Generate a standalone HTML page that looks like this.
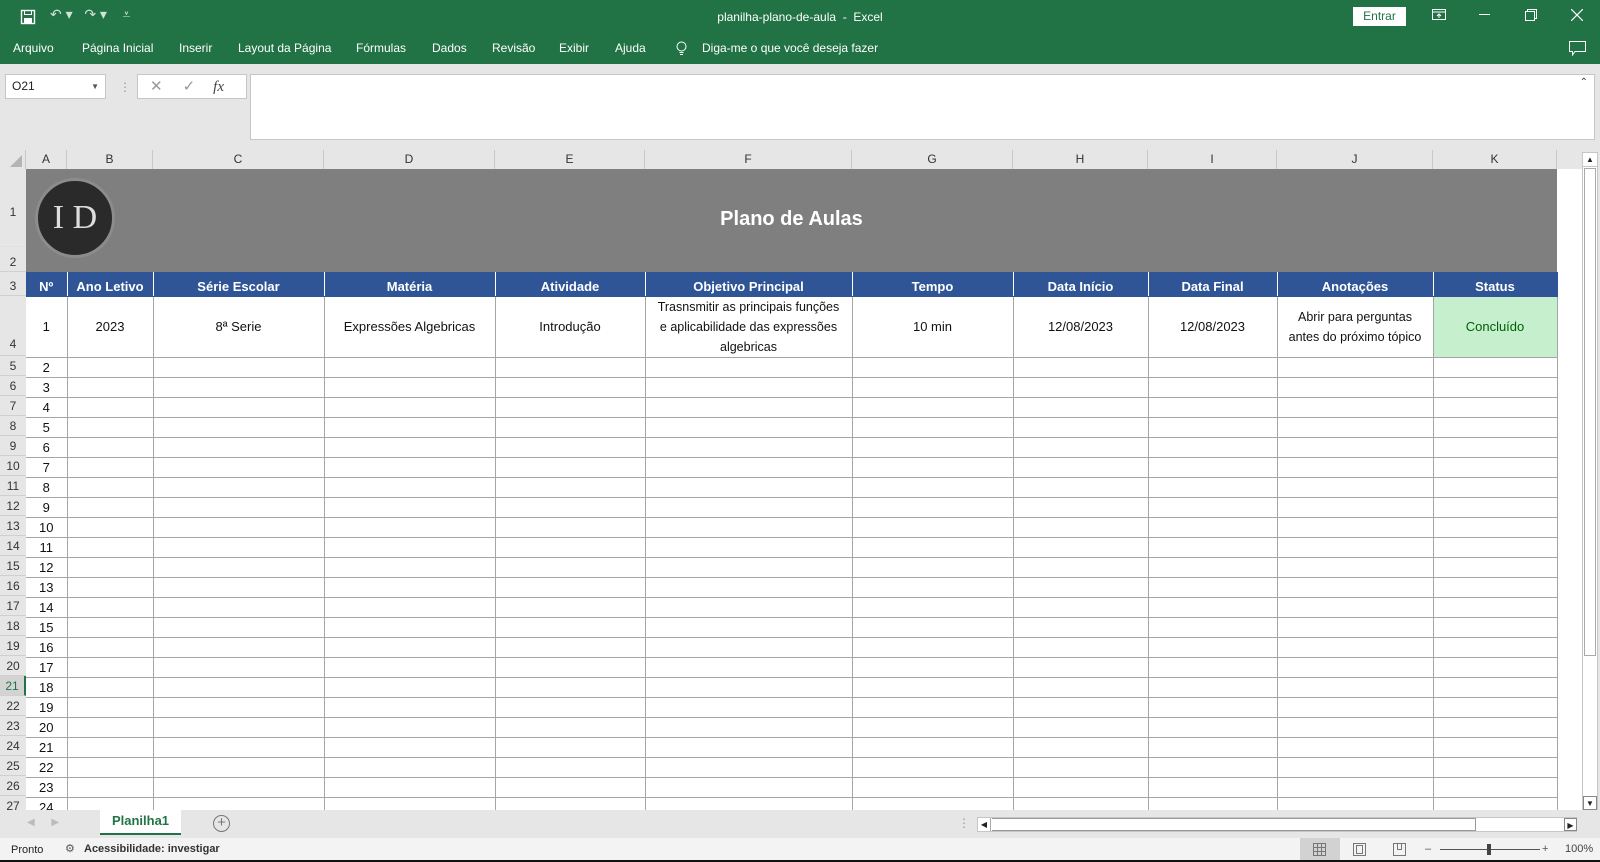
<!DOCTYPE html>
<html><head><meta charset="utf-8"><style>
*{box-sizing:border-box;margin:0;padding:0}
body{width:1600px;height:862px;overflow:hidden;background:#e6e6e6;font-family:"Liberation Sans",sans-serif;position:relative;font-size:12px;color:#222}
.abs{position:absolute}
.green{background:#217346;color:#fff}
.tab{position:absolute;top:41px;font-size:12px;color:#fff}
table{border-collapse:collapse;table-layout:fixed;position:absolute;left:26px;top:169px}
td{font-size:13px;text-align:center;vertical-align:middle;border-right:1px solid #a6a6a6;border-bottom:1px solid #a6a6a6;height:20px;padding:0;overflow:hidden;white-space:nowrap;color:#111}
tr.h td{background:#2f5597;color:#fff;font-weight:bold;height:24px;border-color:#fff;border-bottom-color:#2f5597;padding-top:6px}
.rn{position:absolute;left:0;width:26px;font-size:12px;text-align:center;color:#333;border-bottom:1px solid #d0d0d0;background:#e6e6e6}
.ch{position:absolute;top:150px;height:19px;font-size:12px;text-align:center;line-height:19px;border-right:1px solid #c8c8c8;color:#333}
</style></head><body>
<div class="abs green" style="left:0;top:0;width:1600px;height:64px"></div>
<svg class="abs" style="left:20px;top:9px" width="16" height="16" viewBox="0 0 16 16"><rect x="1.5" y="1.5" width="13" height="13" fill="none" stroke="#fff" stroke-width="1.4"/><rect x="4.5" y="1.5" width="7" height="4" fill="none" stroke="#fff"/><rect x="4" y="9" width="8" height="5" fill="#fff"/></svg>
<div class="abs" style="left:50px;top:6px;color:#cfe3d6;font-size:14px">↶ ▾&nbsp;&nbsp; ↷ ▾&nbsp;&nbsp;&nbsp; ⩡</div>
<div class="abs" style="left:0;width:1600px;top:10px;text-align:center;color:#fff;font-size:12px">planilha-plano-de-aula&nbsp; -&nbsp; Excel</div>
<div class="abs" style="left:1353px;top:7px;width:53px;height:19px;background:#fff;color:#217346;font-size:12px;text-align:center;line-height:19px">Entrar</div>
<svg class="abs" style="left:1432px;top:9px" width="14" height="12"><rect x="0.5" y="0.5" width="13" height="10" fill="none" stroke="#fff"/><line x1="0.5" y1="3" x2="13.5" y2="3" stroke="#fff"/><path d="M7 9V5M5 7l2-2 2 2" stroke="#fff" fill="none"/></svg>
<div class="abs" style="left:1479px;top:14px;width:11px;height:1px;background:#fff"></div>
<svg class="abs" style="left:1525px;top:9px" width="12" height="12"><rect x="0.5" y="2.5" width="9" height="9" fill="none" stroke="#fff"/><path d="M2.5 2.5V0.5H11.5V9.5H9.5" fill="none" stroke="#fff"/></svg>
<svg class="abs" style="left:1571px;top:9px" width="12" height="12"><path d="M0 0L12 12M12 0L0 12" stroke="#fff" stroke-width="1.2"/></svg>
<div class="tab" style="left:13px">Arquivo</div>
<div class="tab" style="left:82px">Página Inicial</div>
<div class="tab" style="left:179px">Inserir</div>
<div class="tab" style="left:238px">Layout da Página</div>
<div class="tab" style="left:356px">Fórmulas</div>
<div class="tab" style="left:432px">Dados</div>
<div class="tab" style="left:492px">Revisão</div>
<div class="tab" style="left:559px">Exibir</div>
<div class="tab" style="left:615px">Ajuda</div>
<svg class="abs" style="left:676px;top:41px" width="11" height="15"><circle cx="5.5" cy="5.5" r="4.5" fill="none" stroke="#fff"/><path d="M3.5 11.5H7.5M4 13.5H7" stroke="#fff"/></svg>
<div class="tab" style="left:702px">Diga-me o que você deseja fazer</div>
<svg class="abs" style="left:1569px;top:41px" width="17" height="15"><path d="M0.5 0.5H16.5V10.5H6L3.5 14V10.5H0.5Z" fill="none" stroke="#fff"/></svg>
<div class="abs" style="left:5px;top:74px;width:101px;height:25px;background:#fff;border:1px solid #c6c6c6;font-size:12px;line-height:23px;padding-left:6px">O21<span style="position:absolute;right:6px;font-size:8px;color:#555">▼</span></div>
<div class="abs" style="left:119px;top:80px;color:#999">⋮</div>
<div class="abs" style="left:137px;top:74px;width:110px;height:25px;background:#fff;border:1px solid #c6c6c6;color:#999;font-size:15px;line-height:23px"><span style="margin-left:12px">✕</span><span style="margin-left:20px">✓</span><span style="margin-left:18px;font-style:italic;font-family:'Liberation Serif';color:#444">fx</span></div>
<div class="abs" style="left:250px;top:74px;width:1345px;height:66px;background:#fff;border:1px solid #c6c6c6"><span style="position:absolute;right:6px;top:2px;font-size:10px;color:#444">⌃</span></div>
<div class="abs" style="left:0;top:150px;width:26px;height:19px;border-right:1px solid #c8c8c8"><svg width="26" height="19"><path d="M22 5V17H10Z" fill="#b4b4b4"/></svg></div>
<div class="ch" style="left:26px;width:41px">A</div>
<div class="ch" style="left:67px;width:86px">B</div>
<div class="ch" style="left:153px;width:171px">C</div>
<div class="ch" style="left:324px;width:171px">D</div>
<div class="ch" style="left:495px;width:150px">E</div>
<div class="ch" style="left:645px;width:207px">F</div>
<div class="ch" style="left:852px;width:161px">G</div>
<div class="ch" style="left:1013px;width:135px">H</div>
<div class="ch" style="left:1148px;width:129px">I</div>
<div class="ch" style="left:1277px;width:156px">J</div>
<div class="ch" style="left:1433px;width:124px">K</div>
<div class="abs" style="left:0;top:169px;width:1582px;height:641px;background:#fff"></div>
<div class="rn" style="top:169px;height:78px;line-height:86px;border-bottom-color:#e0e0e0">1</div>
<div class="rn" style="top:247px;height:25px;line-height:30px">2</div>
<div class="rn" style="top:272px;height:24px;line-height:28px">3</div>
<div class="rn" style="top:296px;height:60px;line-height:96px">4</div>
<div id="rns"></div>
<table>
<colgroup><col style="width:41px"><col style="width:86px"><col style="width:171px"><col style="width:171px"><col style="width:150px"><col style="width:207px"><col style="width:161px"><col style="width:135px"><col style="width:129px"><col style="width:156px"><col style="width:124px"></colgroup>
<tr><td colspan="11" style="height:103px;background:#7f7f7f;border:none;color:#fff;font-weight:bold;font-size:20px;padding-bottom:2px">Plano de Aulas</td></tr>
<tr class="h"><td>Nº</td><td>Ano Letivo</td><td>Série Escolar</td><td>Matéria</td><td>Atividade</td><td>Objetivo Principal</td><td>Tempo</td><td>Data Início</td><td>Data Final</td><td>Anotações</td><td style="border-right-color:#2f5597">Status</td></tr>
<tr style="height:60px"><td>1</td><td>2023</td><td>8ª Serie</td><td>Expressões Algebricas</td><td>Introdução</td><td style="line-height:20px;font-size:12.5px">Trasnsmitir as principais funções<br>e aplicabilidade das expressões<br>algebricas</td><td>10 min</td><td>12/08/2023</td><td>12/08/2023</td><td style="line-height:20px;font-size:12.5px">Abrir para perguntas<br>antes do próximo tópico</td><td style="background:#c6efce;color:#006100">Concluído</td></tr>
<tbody id="rows"></tbody>
</table>
<div class="abs" style="left:35px;top:178px;width:80px;height:80px;border-radius:50%;background:#2a2a2a;border:3px solid #8c8c8c;color:#ddd;font-family:'Liberation Serif',serif;font-size:34px;text-align:center;line-height:74px">I D</div>
<div class="abs" style="left:1582px;top:152px;width:16px;height:658px;background:#fff;border:1px solid #c6c6c6"></div>
<div class="abs" style="left:1583px;top:153px;width:14px;height:14px;font-size:8px;text-align:center;line-height:14px;border-bottom:1px solid #c6c6c6">▲</div>
<div class="abs" style="left:1584px;top:168px;width:12px;height:488px;border:1px solid #aaa;background:#fff"></div>
<div class="abs" style="left:1583px;top:796px;width:14px;height:14px;font-size:8px;text-align:center;line-height:14px;border:1px solid #888">▼</div>
<div class="abs" style="left:0;top:810px;width:1600px;height:28px;background:#e6e6e6"></div>
<div class="abs" style="left:27px;top:817px;color:#bbb;font-size:10px">◀&nbsp;&nbsp;&nbsp;&nbsp;&nbsp;&nbsp;▶</div>
<div class="abs" style="left:100px;top:810px;width:81px;height:25px;background:#fff;border-bottom:2px solid #217346;color:#217346;font-weight:bold;font-size:13px;text-align:center;line-height:22px">Planilha1</div>
<div class="abs" style="left:213px;top:815px;width:17px;height:17px;border:1.5px solid #777;border-radius:50%;text-align:center;line-height:14px;font-size:15px;color:#777">+</div>
<div class="abs" style="left:958px;top:816px;color:#999">⋮</div>
<div class="abs" style="left:977px;top:817px;width:600px;height:15px;background:#fff;border:1px solid #c6c6c6"></div>
<div class="abs" style="left:978px;top:818px;width:13px;height:13px;font-size:8px;line-height:13px;text-align:center;border-right:1px solid #aaa">◀</div>
<div class="abs" style="left:992px;top:818px;width:484px;height:13px;border:1px solid #999;border-left:none"></div>
<div class="abs" style="left:1564px;top:818px;width:13px;height:13px;font-size:8px;line-height:13px;text-align:center;border:1px solid #888">▶</div>
<div class="abs" style="left:0;top:838px;width:1600px;height:22px;background:#f3f3f3;font-size:11px;line-height:22px">
<span style="position:absolute;left:11px;top:1px">Pronto</span>
<span style="position:absolute;left:65px;color:#555">⚙</span>
<span style="position:absolute;left:84px;font-weight:bold;color:#333">Acessibilidade: investigar</span>
<div style="position:absolute;left:1300px;top:0;width:40px;height:22px;background:#d2d2d2"></div>
<svg style="position:absolute;left:1313px;top:5px" width="13" height="13"><path d="M0.5 0.5H12.5V12.5H0.5ZM4.5 0.5V12.5M8.5 0.5V12.5M0.5 4.5H12.5M0.5 8.5H12.5" fill="none" stroke="#777"/></svg>
<svg style="position:absolute;left:1353px;top:5px" width="13" height="13"><rect x="0.5" y="0.5" width="12" height="12" fill="none" stroke="#777"/><rect x="3.5" y="2.5" width="6" height="8" fill="none" stroke="#777"/></svg>
<svg style="position:absolute;left:1393px;top:5px" width="13" height="13"><path d="M0.5 0.5H12.5V12.5H0.5ZM4.5 0.5V6.5H8.5V0.5" fill="none" stroke="#777"/></svg>
<span style="position:absolute;left:1425px;color:#555">–</span>
<div style="position:absolute;left:1440px;top:11px;width:100px;height:1px;background:#555"></div>
<div style="position:absolute;left:1487px;top:6px;width:4px;height:11px;background:#444"></div>
<span style="position:absolute;left:1542px;color:#555">+</span>
<span style="position:absolute;left:1565px;color:#444">100%</span>
</div>
<div class="abs" style="left:0;top:860px;width:1600px;height:2px;background:#111"></div>
<script>
var t='',r='';
for(var i=5;i<=27;i++){t+='<tr><td'+'>'+(i-3)+'</td>'+'<td></td>'.repeat(10)+'</tr>';
r+='<div class="rn" style="top:'+(356+(i-5)*20)+'px;height:20px;line-height:20px'+(i==21?';color:#217346;border-right:2px solid #217346;background:#d3d3d3':'')+'">'+i+'</div>';}
document.getElementById('rows').innerHTML=t;document.getElementById('rns').outerHTML=r;
</script>
</body></html>
